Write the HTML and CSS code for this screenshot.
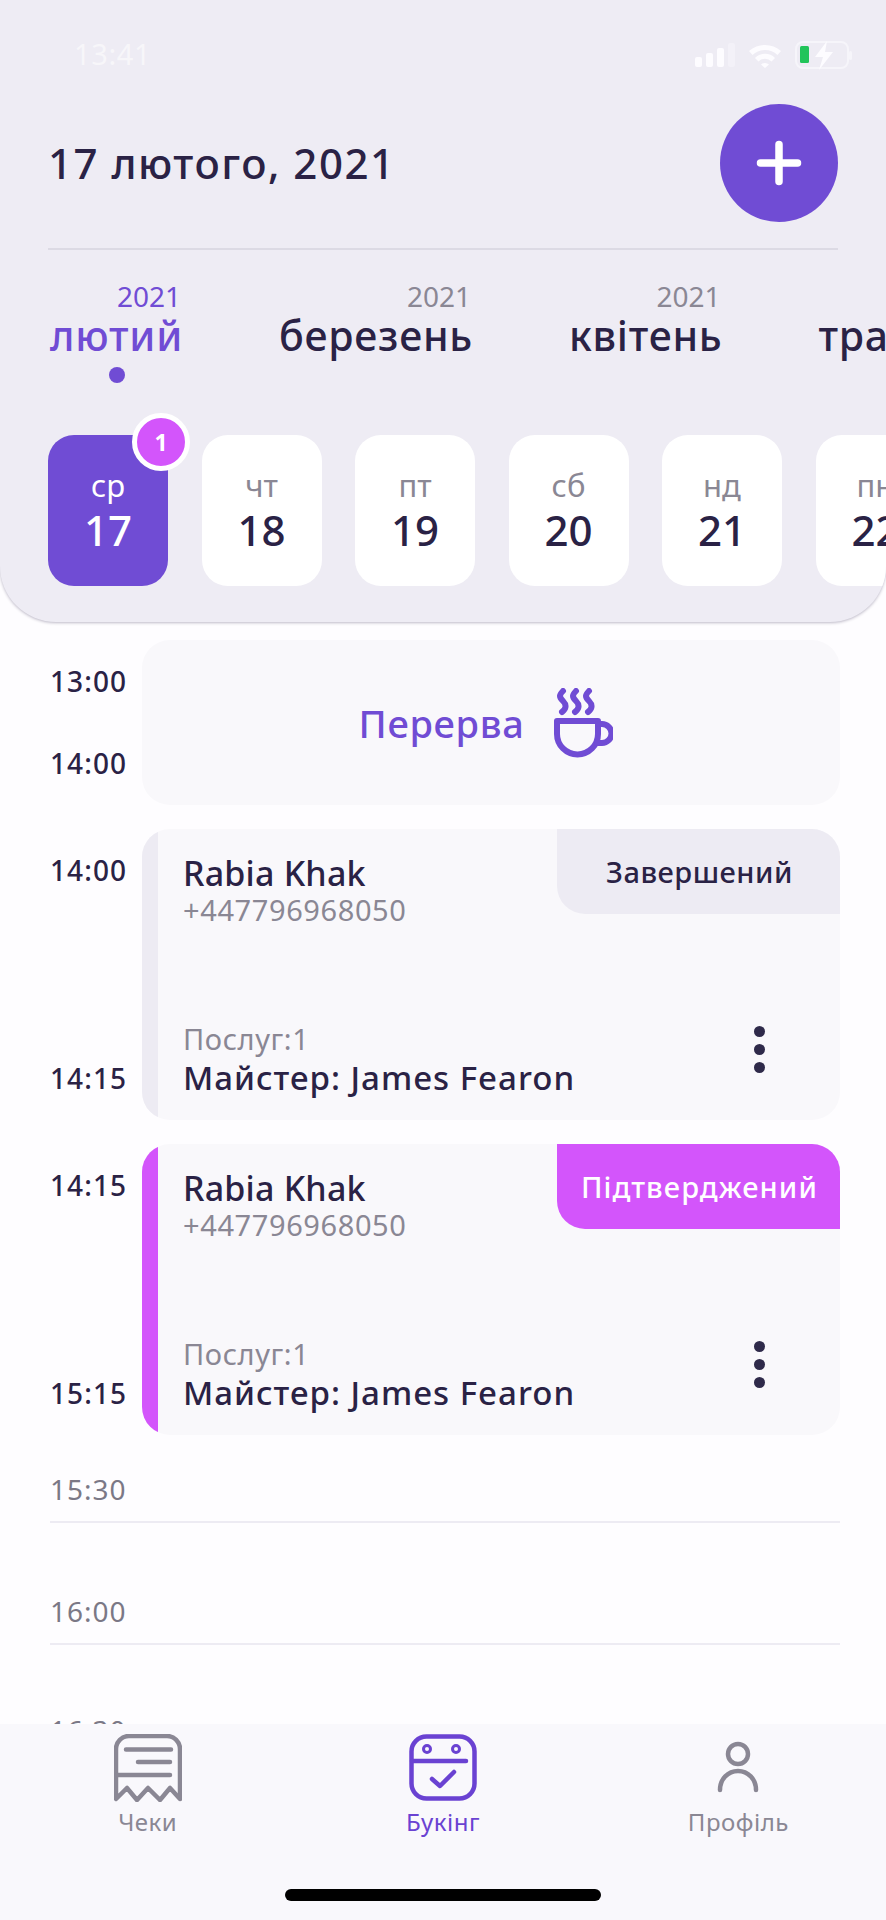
FILE: index.html
```html
<!DOCTYPE html>
<html lang="uk">
<head>
<meta charset="utf-8">
<title>Букінг</title>
<link rel="stylesheet" href="styles.css">
</head>
<body>
<div class="screen">
  <header class="header">
    <div class="status">
      <span class="clock">13:41</span>
      <svg class="status-icons" viewBox="0 0 160 30" width="160" height="30">
        <g fill="#fdfcff">
          <rect x="1" y="17" width="7" height="10" rx="2"/>
          <rect x="12" y="13" width="7" height="14" rx="2"/>
          <rect x="23" y="8" width="7" height="19" rx="2"/>
          <rect x="34" y="3" width="7" height="24" rx="2" opacity=".35"/>
        </g>
        <path d="M55 11a24 24 0 0 1 32 0l-3.500 4a18 18 0 0 0-25 0zM61 18a14 14 0 0 1 20 0l-3.500 3.500a9 9 0 0 0-13 0zM67 24.500a6 6 0 0 1 8 0l-4 3.500z" fill="#fdfcff"/>
        <rect x="102" y="2" width="52" height="26" rx="7" fill="none" stroke="#f6f5fa" stroke-width="2"/>
        <rect x="155" y="11" width="3" height="9" rx="1.500" fill="#f6f5fa"/>
        <rect x="106" y="6" width="9" height="17" rx="1.500" fill="#22c45a"/>
        <path d="M133 1l-12 16h8l-4 13 14-18h-8z" fill="#fdfcff"/>
      </svg>
    </div>
    <div class="title-row">
      <h1 class="title">17 лютого, 2021</h1>
      <button class="add" type="button" aria-label="Додати">
        <svg viewBox="0 0 46 46" width="46" height="46"><path d="M23 4.500v37M4.500 23h37" stroke="#fff" stroke-width="7.500" stroke-linecap="round"/></svg>
      </button>
    </div>
    <div class="divider"></div>
    <div class="months">
      <div class="month month-active"><span class="month-year">2021</span><span class="month-name">лютий</span><span class="month-dot"></span></div>
      <div class="month"><span class="month-year">2021</span><span class="month-name">березень</span></div>
      <div class="month"><span class="month-year">2021</span><span class="month-name">квітень</span></div>
      <div class="month"><span class="month-year">2021</span><span class="month-name">травень</span></div>
    </div>
    <div class="days">
      <div class="day day-active"><span class="day-name">ср</span><span class="day-num">17</span><span class="badge">1</span></div>
      <div class="day"><span class="day-name">чт</span><span class="day-num">18</span></div>
      <div class="day"><span class="day-name">пт</span><span class="day-num">19</span></div>
      <div class="day"><span class="day-name">сб</span><span class="day-num">20</span></div>
      <div class="day"><span class="day-name">нд</span><span class="day-num">21</span></div>
      <div class="day"><span class="day-name">пн</span><span class="day-num">22</span></div>
    </div>
  </header>

  <main class="timeline">
    <section class="row row-break">
      <div class="times"><span>13:00</span><span>14:00</span></div>
      <div class="break">
        <span class="break-label">Перерва</span>
        <svg class="cup" viewBox="0 0 60 70" width="60" height="70" fill="none" stroke="#704cd4" stroke-width="6" stroke-linecap="round" stroke-linejoin="round">
          <path d="M10 3c-4 4-4 6 0 10s3 8-1 11M23 3c-4 4-4 6 0 10s3 8-1 11M36 3c-4 4-4 6 0 10s3 8-1 11"/>
          <path d="M4 33h41v13a20.500 20.500 0 0 1-41 0z"/>
          <path d="M45 36h4a8.500 8.500 0 0 1 0 19h-5"/>
        </svg>
      </div>
    </section>

    <section class="row">
      <div class="times"><span>14:00</span><span>14:15</span></div>
      <article class="card">
        <div class="stripe stripe-done"></div>
        <div class="card-body">
          <div class="card-top">
            <div class="client"><div class="client-name">Rabia Khak</div><div class="client-phone">+447796968050</div></div>
            <div class="tab tab-done">Завершений</div>
          </div>
          <div class="card-bottom">
            <div class="meta"><div class="services">Послуг:1</div><div class="master">Майстер: James Fearon</div></div>
            <div class="more"><i></i><i></i><i></i></div>
          </div>
        </div>
      </article>
    </section>

    <section class="row">
      <div class="times"><span>14:15</span><span>15:15</span></div>
      <article class="card">
        <div class="stripe stripe-confirmed"></div>
        <div class="card-body">
          <div class="card-top">
            <div class="client"><div class="client-name">Rabia Khak</div><div class="client-phone">+447796968050</div></div>
            <div class="tab tab-confirmed">Підтверджений</div>
          </div>
          <div class="card-bottom">
            <div class="meta"><div class="services">Послуг:1</div><div class="master">Майстер: James Fearon</div></div>
            <div class="more"><i></i><i></i><i></i></div>
          </div>
        </div>
      </article>
    </section>

    <div class="slots">
      <div class="slot">15:30</div>
      <div class="slot">16:00</div>
      <div class="slot">16:30</div>
    </div>
  </main>

  <nav class="tabbar">
    <div class="tabbar-items">
      <a class="nav-item">
        <svg viewBox="0 0 68 68" width="68" height="68" fill="none" stroke="#8a8794" stroke-width="4.500" stroke-linecap="round" stroke-linejoin="round">
          <path d="M2 65V15A13 13 0 0 1 15 2h38a13 13 0 0 1 13 13v50L56 54 46 66 34 54 23 66 13 54z"/>
          <path d="M12 15.500h45M24 28h32M3 41h53"/>
        </svg>
        <span>Чеки</span>
      </a>
      <a class="nav-item nav-active">
        <svg viewBox="0 0 68 68" width="68" height="68" fill="none" stroke="#6a42d2" stroke-width="4.500" stroke-linecap="round" stroke-linejoin="round">
          <rect x="2.500" y="2.500" width="63" height="62" rx="15"/>
          <path d="M3 27h54"/>
          <circle cx="18" cy="15" r="3.500" stroke-width="3"/>
          <circle cx="47" cy="15" r="3.500" stroke-width="3"/>
          <path d="M23 45l8 7 14-14"/>
        </svg>
        <span>Букінг</span>
      </a>
      <a class="nav-item">
        <svg viewBox="0 0 68 68" width="68" height="68" fill="none" stroke="#8a8794" stroke-width="4.500" stroke-linecap="round">
          <circle cx="34" cy="20" r="10"/>
          <path d="M16 56c0-11 8-19 18-19s18 8 18 19"/>
        </svg>
        <span>Профіль</span>
      </a>
    </div>
    <div class="home-bar"></div>
  </nav>
</div>
</body>
</html>
```

FILE: styles.css
```css
* {
  box-sizing: border-box;
}

html,
body {
  margin: 0;
  padding: 0;
}

body {
  font-family: "Noto Sans", "Open Sans", sans-serif;
  color: #2a2245;
  background: #fefdff;
}

.screen {
  position: relative;
  width: 886px;
  height: 1920px;
  overflow: hidden;
  background: #fefdff;
}

/* Header panel */
.header {
  height: 622px;
  padding: 0 0 0 48px;
  overflow: hidden;
  background: #eeecf4;
  border-radius: 0 0 56px 56px;
  box-shadow: 0 1px 3px rgba(40, 30, 70, 0.3);
}

.status {
  display: flex;
  justify-content: space-between;
  height: 104px;
  padding: 40px 32px 0 26px;
}

.clock {
  font-size: 29px;
  line-height: 28px;
  letter-spacing: 0.6px;
  color: rgba(255, 255, 255, 0.55);
}

.status-icons {
  display: block;
}

.title-row {
  display: flex;
  align-items: center;
  justify-content: space-between;
  height: 118px;
  padding-right: 48px;
}

.title {
  margin: 0;
  font-size: 42px;
  font-weight: 500;
  line-height: 50px;
  letter-spacing: 1.5px;
}

.add {
  display: flex;
  align-items: center;
  justify-content: center;
  width: 118px;
  height: 118px;
  padding: 0;
  border: 0;
  border-radius: 50%;
  background: #704cd4;
}

.divider {
  height: 2px;
  margin: 26px 48px 0 0;
  background: #dcdae4;
}

.months {
  display: flex;
  gap: 96px;
  height: 104px;
  margin-top: 33px;
  padding-left: 2px;
}

.month {
  display: flex;
  flex: none;
  flex-direction: column;
  align-items: flex-end;
}

.month-year {
  padding-right: 2px;
  font-size: 28px;
  line-height: 26px;
  color: #8a8794;
}

.month-name {
  font-size: 41px;
  font-weight: 500;
  line-height: 52px;
  letter-spacing: 0.75px;
}

.month-dot {
  align-self: center;
  width: 16px;
  height: 16px;
  margin-top: 6px;
  border-radius: 50%;
  background: #704cd4;
}

.month-active .month-year,
.month-active .month-name {
  color: #704cd4;
}

.days {
  display: flex;
  gap: 33.5px;
  margin-top: 48px;
}

.day {
  position: relative;
  display: flex;
  flex: none;
  flex-direction: column;
  align-items: center;
  width: 120px;
  height: 151px;
  padding-top: 28px;
  border-radius: 26px;
  background: #ffffff;
}

.day-name {
  font-size: 31px;
  line-height: 44px;
  color: #8a8794;
}

.day-num {
  font-size: 42px;
  font-weight: 500;
  line-height: 45px;
}

.day-active {
  background: #704cd4;
}

.day-active .day-name,
.day-active .day-num {
  color: #ffffff;
}

.badge {
  position: absolute;
  top: -22px;
  right: -22px;
  display: flex;
  align-items: center;
  justify-content: center;
  width: 58px;
  height: 58px;
  border: 5px solid #ffffff;
  border-radius: 50%;
  background: #d355fb;
  color: #ffffff;
  font-size: 23px;
  font-weight: 700;
}

/* Schedule */
.timeline {
  display: flex;
  flex-direction: column;
  gap: 24px;
  padding: 18px 46px 0 50px;
}

.row {
  display: flex;
}

.times {
  display: flex;
  flex: none;
  flex-direction: column;
  justify-content: space-between;
  width: 92px;
  padding: 25px 0 26px;
  font-size: 28px;
  font-weight: 500;
  line-height: 32px;
  letter-spacing: 1.1px;
}

.break {
  display: flex;
  flex: 1;
  align-items: center;
  justify-content: center;
  gap: 29px;
  height: 165px;
  padding-right: 10px;
  border-radius: 28px;
  background: #f9f8fb;
}

.break-label {
  font-size: 38px;
  font-weight: 500;
  letter-spacing: 0.7px;
  color: #704cd4;
}

.card {
  display: flex;
  flex: 1;
  height: 291px;
  overflow: hidden;
  border-radius: 28px;
  background: #f9f8fb;
}

.stripe {
  flex: none;
  width: 16px;
}

.stripe-done {
  background: #edebf3;
}

.stripe-confirmed {
  background: #d355fb;
}

.card-body {
  display: flex;
  flex: 1;
  flex-direction: column;
  justify-content: space-between;
}

.card-top {
  display: flex;
  justify-content: space-between;
}

.client {
  padding: 23px 0 0 25px;
}

.client-name {
  font-size: 34px;
  font-weight: 500;
  line-height: 42px;
  letter-spacing: 0.2px;
}

.client-phone {
  font-size: 29px;
  line-height: 32px;
  letter-spacing: 0.6px;
  color: #8a8794;
}

.tab {
  display: flex;
  align-items: center;
  justify-content: center;
  width: 283px;
  height: 85px;
  padding-left: 2px;
  border-radius: 0 0 0 28px;
  font-size: 29px;
  font-weight: 500;
  letter-spacing: 0.5px;
}

.tab-done {
  background: #edebf3;
}

.tab-confirmed {
  background: #d355fb;
  color: #ffffff;
  letter-spacing: 1.1px;
}

.card-bottom {
  display: flex;
  justify-content: space-between;
  padding: 0 75px 22px 25px;
}

.services {
  font-size: 29px;
  line-height: 36px;
  letter-spacing: 0.6px;
  color: #8a8794;
}

.master {
  font-size: 33px;
  font-weight: 500;
  line-height: 41px;
  letter-spacing: 1px;
}

.more {
  display: flex;
  flex-direction: column;
  gap: 7px;
  padding-top: 5px;
}

.more i {
  display: block;
  width: 11px;
  height: 11px;
  border-radius: 50%;
  background: #2f2a4a;
}

.slots {
  display: flex;
  flex-direction: column;
  gap: 72px;
  margin-top: 14px;
}

.slot {
  padding-bottom: 16px;
  border-bottom: 2px solid #edebf3;
  font-size: 28px;
  line-height: 32px;
  letter-spacing: 1px;
  color: #7b7886;
}

/* The last slot sits partly under the tab bar */
.slot:last-child {
  margin-top: -3px;
}

/* Bottom navigation */
.tabbar {
  position: absolute;
  top: 1724px;
  left: 0;
  width: 886px;
  height: 196px;
  padding-top: 10px;
  background: #f9f8fc;
}

.tabbar-items {
  display: grid;
  grid-template-columns: repeat(3, 1fr);
}

.nav-item {
  display: flex;
  flex-direction: column;
  align-items: center;
  font-size: 24px;
  line-height: 30px;
  letter-spacing: 0.5px;
  color: #8a8794;
}

.nav-item svg {
  display: block;
  margin-bottom: 5px;
}

.nav-active {
  color: #6a42d2;
}

.home-bar {
  width: 316px;
  height: 12px;
  margin: 52px auto 0;
  border-radius: 6px;
  background: #000000;
}
```
